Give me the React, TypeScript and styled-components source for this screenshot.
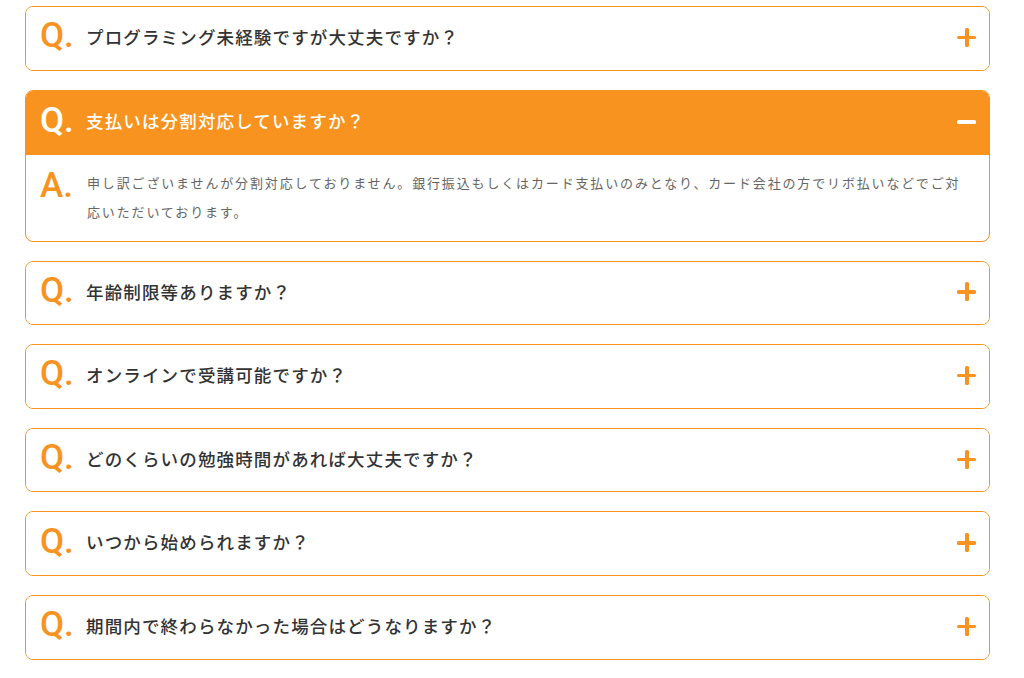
import React, { useState } from "react";
import styled, { createGlobalStyle } from "styled-components";

const ORANGE = "#f7931e";

const GlobalStyle = createGlobalStyle`
    body {
        margin: 0;
        background: #fff;
        font-family: "Noto Sans CJK JP", "Noto Sans", sans-serif;
    }
`;

const FaqList = styled.div`
    display: flex;
    flex-direction: column;
    gap: 19px;
    width: 965px;
    padding: 6px 0 0 25px;
`;

const Item = styled.div`
    border: 1px solid ${ORANGE};
    border-radius: 8px;
    overflow: hidden;
    background: #fff;
`;

const Header = styled.div<{ $open: boolean }>`
    box-sizing: border-box;
    display: flex;
    align-items: center;
    height: ${props => props.$open ? 64 : 62.6}px;
    padding: 0 13px 5px 14px;
    background: ${props => props.$open ? ORANGE : "#fff"};
    color: ${props => props.$open ? "#fff" : "#333"};
    cursor: pointer;
`;

const Mark = styled.span<{ $light?: boolean }>`
    flex: none;
    width: 46px;
    font-family: Roboto, "Liberation Sans", sans-serif;
    font-weight: 500;
    font-size: 35px;
    line-height: 1;
    color: ${props => props.$light ? "#fff" : ORANGE};
`;

const Question = styled.span`
    flex: 1;
    font-size: 17.5px;
    font-weight: 500;
    letter-spacing: 1.15px;
    line-height: 1;
    margin-top: 2px;
`;

// plus / minus drawn from two bars
const Toggle = styled.span<{ $open: boolean }>`
    position: relative;
    flex: none;
    width: 19px;
    height: 19px;
    margin-top: 3px;

    &::before, &::after {
        content: "";
        position: absolute;
        background: ${props => props.$open ? "#fff" : ORANGE};
        border-radius: 1.5px;
    }
    &::before {
        left: 0;
        right: 0;
        top: 8px;
        height: 3.5px;
    }
    &::after {
        display: ${props => props.$open ? "none" : "block"};
        top: 0;
        bottom: 0;
        left: 8px;
        width: 3.5px;
    }
`;

const Body = styled.div`
    display: flex;
    padding: 13px 20px 15px 13px;
`;

const Answer = styled.p`
    flex: 1;
    margin: 0;
    font-size: 13px;
    line-height: 29px;
    letter-spacing: 1.85px;
    color: #666;
`;

const AnswerMark = styled(Mark)`
    margin-top: 0;
    padding-left: 1px;
    width: 47px;
`;

const faqs = [
    { q: "プログラミング未経験ですが大丈夫ですか？", a: "未経験の方でも基礎から丁寧に学べるカリキュラムをご用意しております。" },
    { q: "支払いは分割対応していますか？", a: "申し訳ございませんが分割対応しておりません。銀行振込もしくはカード支払いのみとなり、カード会社の方でリボ払いなどでご対応いただいております。" },
    { q: "年齢制限等ありますか？", a: "年齢制限はございません。" },
    { q: "オンラインで受講可能ですか？", a: "はい、オンラインで受講いただけます。" },
    { q: "どのくらいの勉強時間があれば大丈夫ですか？", a: "週に10時間程度を目安にしてください。" },
    { q: "いつから始められますか？", a: "お申し込み後すぐに始められます。" },
    { q: "期間内で終わらなかった場合はどうなりますか？", a: "延長プランをご用意しております。" },
];

export default function App() {
    const [open, setOpen] = useState(1);

    return (
        <>
            <GlobalStyle />
            <FaqList>
                {faqs.map((f, i) => {
                    const isOpen = open === i;
                    return (
                        <Item key={i}>
                            <Header $open={isOpen} onClick={() => setOpen(isOpen ? -1 : i)}>
                                <Mark $light={isOpen}>Q.</Mark>
                                <Question>{f.q}</Question>
                                <Toggle $open={isOpen} />
                            </Header>
                            {isOpen && (
                                <Body>
                                    <AnswerMark>A.</AnswerMark>
                                    <Answer>{f.a}</Answer>
                                </Body>
                            )}
                        </Item>
                    );
                })}
            </FaqList>
        </>
    );
}
